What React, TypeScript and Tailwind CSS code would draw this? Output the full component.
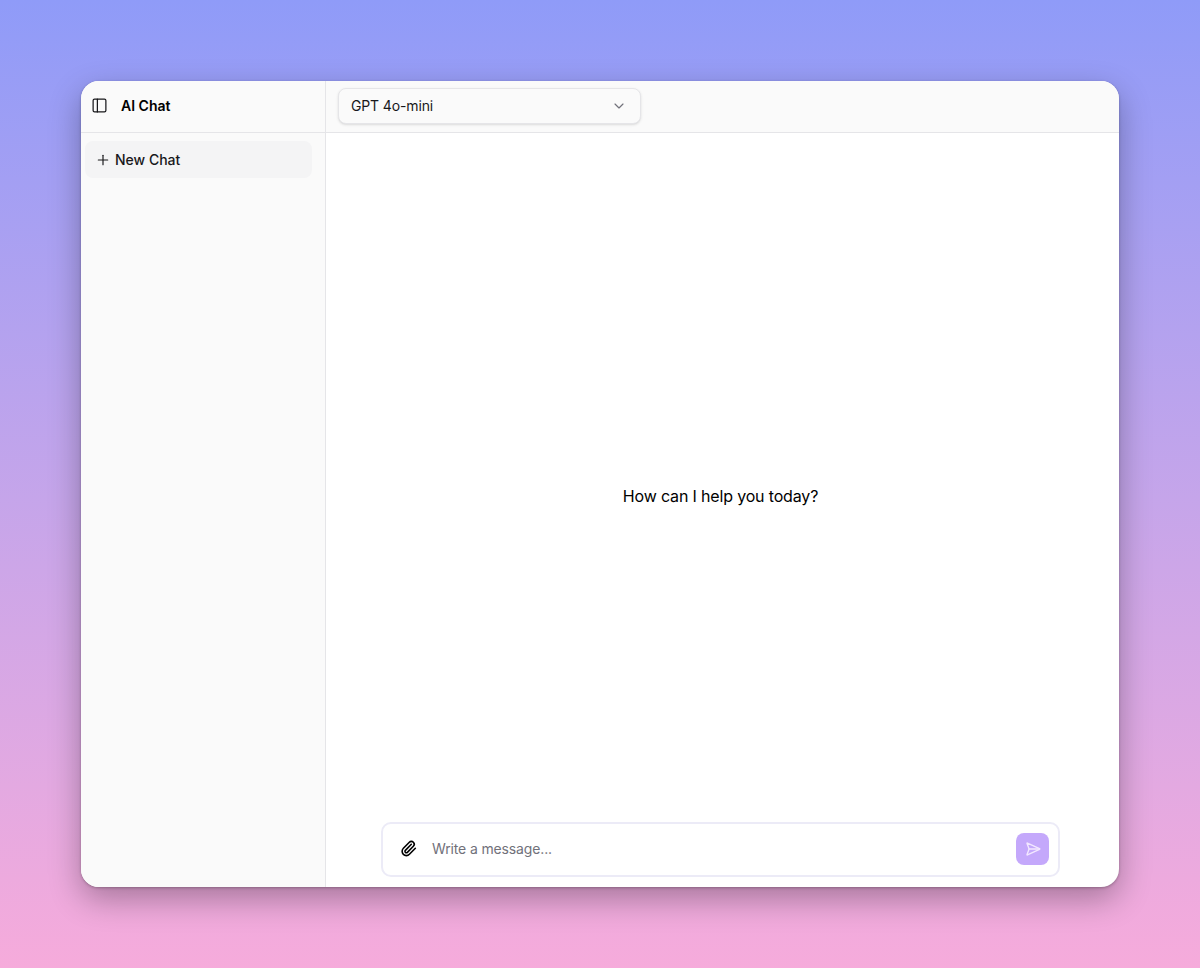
import { ChevronDown, PanelLeft, Paperclip, Plus, SendHorizontal } from 'lucide-react';

const App = () => {
  return (
    <div className="h-[968px] flex items-center justify-center bg-gradient-to-b from-[#8f9bf8] to-[#f6abdb] font-['Inter',sans-serif] text-black">
      <div className="w-[1038px] h-[806px] flex rounded-[18px] overflow-hidden bg-white shadow-[0_12px_32px_rgba(0,0,0,0.3),0_1px_3px_rgba(0,0,0,0.25)]">
        <aside className="w-[245px] shrink-0 flex flex-col bg-[#fafafa] border-r border-[#e5e5e8]">
          <div className="h-[52px] shrink-0 flex items-center gap-[13px] pl-[10px] pb-[2px] border-b border-[#e5e5e8]">
            <PanelLeft size={17} strokeWidth={1.75} className="text-[#18181b]" />
            <span className="text-sm font-semibold">AI Chat</span>
          </div>
          <div className="pl-1 pr-[13px] pt-2">
            <button className="w-full h-[37px] flex items-center gap-[4px] pl-[10px] rounded-lg bg-[#f4f4f5] text-sm font-medium text-[#18181b]">
              <Plus size={16} strokeWidth={1.75} />
              New Chat
            </button>
          </div>
        </aside>

        <main className="flex-1 flex flex-col min-w-0">
          <header className="h-[52px] shrink-0 flex items-center pl-3 pb-[2px] bg-[#fafafa] border-b border-[#e5e5e8]">
            <button className="w-[303px] h-9 flex items-center justify-between pl-3 pr-[13px] rounded-lg border border-[#e5e5e8] bg-[#fafafa] shadow-sm text-sm tracking-[-0.01em] text-[#18181b]">
              GPT 4o-mini
              <ChevronDown size={16} strokeWidth={1.75} className="text-[#71717a]" />
            </button>
          </header>

          <div className="flex-1 flex items-center justify-center pt-[36px] pr-[4px] text-base tracking-[-0.01em]">
            How can I help you today?
          </div>

          <div className="pl-[55px] pr-[59px] pb-[10px]">
            <div className="h-[55px] flex items-center pl-[18px] pr-[9px] rounded-[10px] border-2 border-[#ecebf7] bg-white">
              <Paperclip size={17} strokeWidth={2.25} className="text-black shrink-0 -translate-x-px -translate-y-px" />
              <span className="flex-1 ml-[14px] text-sm tracking-[-0.01em] text-[#71717a] -translate-y-px">Write a message...</span>
              <button className="w-[33px] h-[32px] mb-px flex items-center justify-center rounded-lg bg-[#c4a8fb]">
                <SendHorizontal size={16} strokeWidth={2} className="text-[#f3e8ff]" />
              </button>
            </div>
          </div>
        </main>
      </div>
    </div>
  );
};

export default App;
